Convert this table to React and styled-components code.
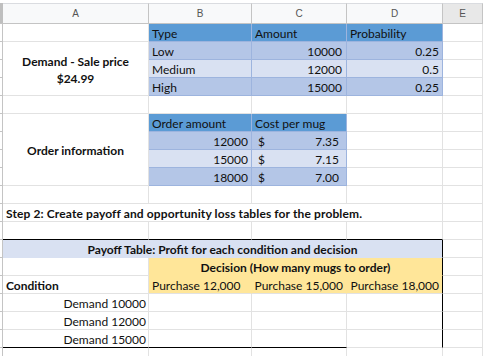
import React from "react";
import styled, { createGlobalStyle } from "styled-components";

const Global = createGlobalStyle`
  html, body { margin: 0; padding: 0; background: #fff; overflow: hidden; }
  body { font-family: Lato, "Liberation Sans", sans-serif; }
`;

const GRID = "#e2e2e2";
const HEAD_LINE = "#c4c4c4";
const BLUE = "#5b9bd5";
const BAND_DARK = "#b4c6e7";
const BAND_LIGHT = "#d9e1f2";
const TABLE_LINE = "#9db4de";
const YELLOW = "#ffe699";
const BLACK = "#000";

const Sheet = styled.div`
  display: grid;
  grid-template-columns: 3px 146px 103px 95px 96px 1fr;
  grid-template-rows: 21px repeat(19, 18px);
  padding-top: 3px;
  width: 483px;
  height: 356px;
  box-sizing: border-box;
  overflow: hidden;
`;

const Corner = styled.div`
  background: #bfbfbf;
  border-bottom: 1px solid ${HEAD_LINE};
  box-sizing: border-box;
`;

const ColHead = styled.div`
  box-sizing: border-box;
  background: ${(p) => (p.$dark ? "#e8e8e8" : "#f8f9fa")};
  border-top: 1px solid #dadce0;
  border-right: 1px solid ${HEAD_LINE};
  border-bottom: 1px solid ${HEAD_LINE};
  font-family: "Liberation Sans", Arial, sans-serif;
  font-size: 10px;
  color: #555;
  display: flex;
  align-items: center;
  justify-content: center;
`;

const RowHead = styled.div`
  box-sizing: border-box;
  border-right: 1px solid ${HEAD_LINE};
  border-bottom: 1px solid ${HEAD_LINE};
  background: #fff;
`;

const Cell = styled.div`
  box-sizing: border-box;
  min-width: 0;
  background: ${(p) => p.$bg || "#fff"};
  border-right: 1px solid ${(p) => p.$br || GRID};
  border-bottom: 1px solid ${(p) => p.$bb || GRID};
  grid-column: ${(p) => (p.$cols ? `span ${p.$cols}` : "auto")};
  grid-row: ${(p) => (p.$rows ? `span ${p.$rows}` : "auto")};
  font-size: 12px;
  line-height: 15px;
  font-weight: ${(p) => (p.$bold ? 700 : 400)};
  color: #111;
  white-space: nowrap;
  overflow: visible;
  display: flex;
  align-items: flex-end;
  justify-content: ${(p) =>
    p.$align === "right" ? "flex-end" : p.$align === "center" ? "center" : "flex-start"};
  padding: 0 ${(p) => p.$pr ?? 3}px 0 3px;
`;

const MergedLabel = styled(Cell)`
  flex-direction: column;
  align-items: center;
  justify-content: center;
  line-height: 17px;
  padding: 2px 0 0 0;
  text-align: center;
`;

const Accounting = styled(Cell)`
  justify-content: space-between;
  padding: 0 7px 0 6px;
`;

const StepNote = styled(Cell)`
  letter-spacing: 0.12px;
`;

const blueHead = { $bg: BLUE, $br: TABLE_LINE, $bb: TABLE_LINE };
const band = (dark) => ({
  $bg: dark ? BAND_DARK : BAND_LIGHT,
  $br: TABLE_LINE,
  $bb: TABLE_LINE,
});

const EmptyRow = () => (
  <>
    <RowHead />
    <Cell />
    <Cell />
    <Cell />
    <Cell />
    <Cell />
  </>
);

export default function App() {
  return (
    <>
      <Global />
      <Sheet>
        <Corner />
        <ColHead>A</ColHead>
        <ColHead>B</ColHead>
        <ColHead>C</ColHead>
        <ColHead>D</ColHead>
        <ColHead $dark>E</ColHead>

        {/* Row 1 */}
        <RowHead />
        <Cell />
        <Cell {...blueHead}>Type</Cell>
        <Cell {...blueHead}>Amount</Cell>
        <Cell {...blueHead}>Probability</Cell>
        <Cell />

        {/* Row 2 */}
        <RowHead />
        <MergedLabel $rows={3} $bold>
          <span>Demand - Sale price</span>
          <span>$24.99</span>
        </MergedLabel>
        <Cell {...band(true)}>Low</Cell>
        <Cell {...band(true)} $align="right" $pr={4}>10000</Cell>
        <Cell {...band(true)} $align="right">0.25</Cell>
        <Cell />

        {/* Row 3 */}
        <RowHead />
        <Cell {...band(false)}>Medium</Cell>
        <Cell {...band(false)} $align="right" $pr={4}>12000</Cell>
        <Cell {...band(false)} $align="right">0.5</Cell>
        <Cell />

        {/* Row 4 */}
        <RowHead />
        <Cell {...band(true)}>High</Cell>
        <Cell {...band(true)} $align="right" $pr={4}>15000</Cell>
        <Cell {...band(true)} $align="right">0.25</Cell>
        <Cell />

        {/* Row 5 */}
        <EmptyRow />

        {/* Row 6 */}
        <RowHead />
        <MergedLabel $rows={4} $bold>
          <span>Order information</span>
        </MergedLabel>
        <Cell {...blueHead}>Order amount</Cell>
        <Cell {...blueHead}>Cost per mug</Cell>
        <Cell />
        <Cell />

        {/* Rows 7-9 */}
        {[
          ["12000", "7.35", true],
          ["15000", "7.15", false],
          ["18000", "7.00", true],
        ].map(([qty, cost, dark]) => (
          <React.Fragment key={qty}>
            <RowHead />
            <Cell {...band(dark)} $align="right">{qty}</Cell>
            <Accounting {...band(dark)}>
              <span>$</span>
              <span>{cost}</span>
            </Accounting>
            <Cell />
            <Cell />
          </React.Fragment>
        ))}

        {/* Row 10 */}
        <EmptyRow />

        {/* Row 11 */}
        <RowHead />
        <StepNote $cols={4} $bold>
          Step 2: Create payoff and opportunity loss tables for the problem.
        </StepNote>
        <Cell />

        {/* Row 12 */}
        <RowHead />
        <Cell $bb={BLACK} />
        <Cell $bb={BLACK} />
        <Cell $bb={BLACK} />
        <Cell $bb={BLACK} />
        <Cell />

        {/* Row 13 */}
        <RowHead />
        <Cell $cols={4} $bg={BAND_LIGHT} $bb={BAND_LIGHT} $br={BLACK} $bold $align="center">
          Payoff Table: Profit for each condition and decision
        </Cell>
        <Cell />

        {/* Row 14 */}
        <RowHead />
        <Cell />
        <Cell $cols={3} $bg={YELLOW} $bb={YELLOW} $br={BLACK} $bold $align="center">
          Decision (How many mugs to order)
        </Cell>
        <Cell />

        {/* Row 15 */}
        <RowHead />
        <Cell $bold>Condition</Cell>
        <Cell $bg={YELLOW} $br={YELLOW}>Purchase 12,000</Cell>
        <Cell $bg={YELLOW} $br={YELLOW} $align="right">Purchase 15,000</Cell>
        <Cell $bg={YELLOW} $br={BLACK} $align="right">Purchase 18,000</Cell>
        <Cell />

        {/* Rows 16-18 */}
        {["10000", "12000", "15000"].map((d, i) => {
          const bb = i === 2 ? BLACK : undefined;
          return (
            <React.Fragment key={d}>
              <RowHead />
              <Cell $align="right" $bb={bb} $pr={2}>
                Demand {d}
              </Cell>
              <Cell $bb={bb} />
              <Cell $bb={bb} />
              <Cell $br={BLACK} />
              <Cell />
            </React.Fragment>
          );
        })}

        {/* Row 19 */}
        <EmptyRow />
      </Sheet>
    </>
  );
}
